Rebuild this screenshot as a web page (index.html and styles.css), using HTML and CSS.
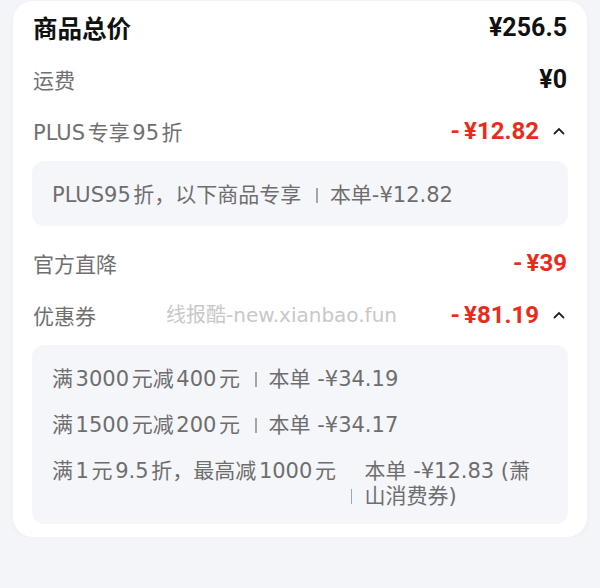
FILE: index.html
```html
<!DOCTYPE html>
<html>
<head>
    <meta charset="utf-8">
    <title>订单金额</title>
    <link rel="stylesheet" href="styles.css">
</head>
<body>
    <div class="card">
        <div class="row total">
            <span class="label">商品总价</span>
            <span class="amount">¥256.5</span>
        </div>
        <div class="row">
            <span class="label">运费</span>
            <span class="amount">¥0</span>
        </div>
        <div class="row">
            <span class="label">PLUS专享95折</span>
            <span class="amount red">-<i class="yen">¥</i>12.82</span>
            <svg class="caret" width="14" height="10" viewBox="0 0 14 10"><polyline points="2,8 7,3 12,8" fill="none" stroke="#222" stroke-width="1.8"/></svg>
        </div>
        <div class="detail single">
            <div class="coupon">
                <span class="cond">PLUS95折，以下商品专享</span>
                <span class="sep"></span>
                <span class="save">本单-¥12.82</span>
            </div>
        </div>
        <div class="row">
            <span class="label">官方直降</span>
            <span class="amount red">-<i class="yen">¥</i>39</span>
        </div>
        <div class="row">
            <span class="label">优惠券</span>
            <span class="watermark">线报酷-new.xianbao.fun</span>
            <span class="amount red">-<i class="yen">¥</i>81.19</span>
            <svg class="caret" width="14" height="10" viewBox="0 0 14 10"><polyline points="2,8 7,3 12,8" fill="none" stroke="#222" stroke-width="1.8"/></svg>
        </div>
        <div class="detail last">
            <div class="coupon">
                <span class="cond">满3000元减400元</span>
                <span class="sep"></span>
                <span class="save">本单 -¥34.19</span>
            </div>
            <div class="coupon">
                <span class="cond">满1500元减200元</span>
                <span class="sep"></span>
                <span class="save">本单 -¥34.17</span>
            </div>
            <div class="coupon">
                <span class="cond">满1元9.5折，最高减1000元</span>
                <span class="sep"></span>
                <span class="save">本单 -¥12.83 (萧山消费券)</span>
            </div>
        </div>
    </div>
</body>
</html>
```

FILE: styles.css
```css
body {
    margin: 0;
    background-color: #f4f5f9;
    font-family: "DejaVu Sans", "Noto Sans CJK SC", sans-serif;
    color: #1a1a1a;
    text-autospace: normal;
}

.card {
    margin: 1px 13px 0;
    padding: 0 20px 13px;
    background-color: #fff;
    border-radius: 20px;
    box-shadow: 0 2px 6px rgba(0, 0, 0, 0.03);
}

.row {
    position: relative;
    display: flex;
    align-items: center;
    height: 52px;
}

.label {
    flex: 1;
    font-size: 21px;
    color: #707070;
}

.total .label {
    font-size: 24.5px;
    font-weight: 700;
    color: #111;
}

.amount {
    font-family: Roboto, "Noto Sans", sans-serif;
    font-size: 25px;
    font-weight: 700;
    color: #111;
}

.amount.red {
    font-size: 24px;
    color: #ec2a1c;
}

.yen {
    font-style: normal;
    margin-left: 4px;
}

.caret {
    margin-left: 13px;
    margin-right: 1px;
}

.watermark {
    position: absolute;
    left: 133px;
    top: 10px;
    font-size: 20px;
    color: #c8c8c8;
}

.detail {
    margin: 4px -1px 11px;
    padding: 22px 20px 15px;
    background-color: #f5f6fa;
    border-radius: 12px;
}

.detail.single {
    padding: 22px 20px 18px;
}

.detail.last {
    margin-bottom: 0;
}

.coupon {
    display: flex;
    font-size: 21px;
    line-height: 25px;
    color: #6e6e6e;
}

.coupon + .coupon {
    margin-top: 21px;
}

.cond {
    flex-shrink: 0;
}

.sep {
    flex-shrink: 0;
    align-self: flex-end;
    width: 1.5px;
    height: 15px;
    margin: 0 12px 5px 15px;
    background-color: #a5a5a5;
}

.save {
    min-width: 0;
}
```
